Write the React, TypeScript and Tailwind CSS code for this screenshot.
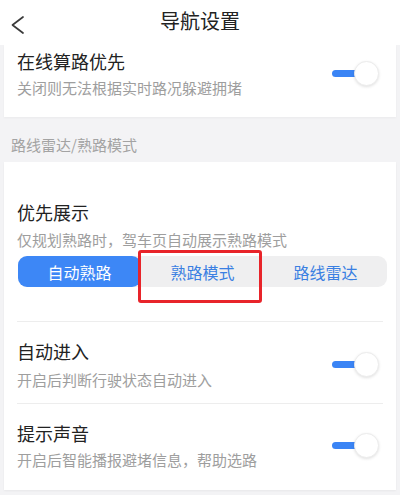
import React from "react";

const font = { fontFamily: '"Noto Sans CJK SC", "Noto Sans", sans-serif' };

function Toggle() {
    return (
        <div className="relative w-[47px] h-[25px] shrink-0 mr-[4px]">
            <div className="absolute left-0 top-[9px] w-[28px] h-[7px] rounded-full bg-[#3a84f5]" />
            <div className="absolute right-0 top-0 w-[25px] h-[25px] rounded-full bg-white border border-[#ececec] shadow-[0_1px_3px_rgba(0,0,0,0.12)]" />
        </div>
    );
}

function SwitchRow({ title, desc, gap, pt, pb, border }: { title: string; desc: string; gap: string; pt: string; pb: string; border?: boolean }) {
    return (
        <div className={`flex items-center justify-between ${pt} ${pb} ${border ? "border-t border-[#ededed]" : ""}`}>
            <div className="flex flex-col">
                <p className="text-[18px] leading-[24px] text-[#222]">{title}</p>
                <p className={`text-[15px] leading-[20px] text-[#9e9e9e] ${gap}`}>{desc}</p>
            </div>
            <Toggle />
        </div>
    );
}

export default function App() {
    return (
        <div className="w-[400px] min-h-[495px] bg-[#f3f3f5] overflow-hidden" style={font}>
            {/*Header*/}
            <div className="h-[45px] bg-white grid grid-cols-[40px_1fr_40px] items-center">
                <svg width="40" height="45" viewBox="0 0 40 45">
                    <polyline points="23,17 12.5,25 23,33" fill="none" stroke="#3a3a3a" strokeWidth="1.7" strokeLinecap="round" strokeLinejoin="round" />
                </svg>
                <p className="text-center text-[20px] leading-[28px] text-[#222] -mt-[4px]">导航设置</p>
                <div />
            </div>

            {/*Card 1*/}
            <div className="mx-[4px] bg-white px-[13px] shadow-[0_1px_2px_rgba(0,0,0,0.04)]">
                <SwitchRow title="在线算路优先" desc="关闭则无法根据实时路况躲避拥堵" gap="mt-[5px]" pt="pt-[4px]" pb="pb-[19px]" />
            </div>

            {/*Section title*/}
            <div className="h-[45px] pt-[18px] px-[11px]">
                <p className="text-[15px] leading-[20px] text-[#a3a3a3]">路线雷达/熟路模式</p>
            </div>

            {/*Card 2*/}
            <div className="mx-[4px] bg-white px-[13px] shadow-[0_1px_2px_rgba(0,0,0,0.05)]">
                <div className="pt-[38px] pb-[34px]">
                    <p className="text-[18px] leading-[24px] text-[#222]">优先展示</p>
                    <p className="mt-[6px] text-[15px] leading-[20px] text-[#9e9e9e]">仅规划熟路时，驾车页自动展示熟路模式</p>
                    <div className="relative mt-[6px] ml-[1px] w-[369px]">
                        <div className="grid grid-cols-3 h-[31px] rounded-[9px] bg-[#efeff0] text-[16px]">
                            <div className="rounded-[9px] bg-[#3d87f6] text-white flex items-center justify-center">自动熟路</div>
                            <div className="text-[#3a7fe2] flex items-center justify-center">熟路模式</div>
                            <div className="text-[#3a7fe2] flex items-center justify-center">路线雷达</div>
                        </div>
                        <div className="absolute left-[120px] -top-[6px] w-[124px] h-[53px] border-[3px] border-[#e8242a] rounded-[3px]" />
                    </div>
                </div>
                <SwitchRow title="自动进入" desc="开启后判断行驶状态自动进入" gap="mt-[7px]" pt="pt-[17px]" pb="pb-[13px]" border />
                <SwitchRow title="提示声音" desc="开启后智能播报避堵信息，帮助选路" gap="mt-[5px]" pt="pt-[17px]" pb="pb-[20px]" border />
            </div>
        </div>
    );
}
